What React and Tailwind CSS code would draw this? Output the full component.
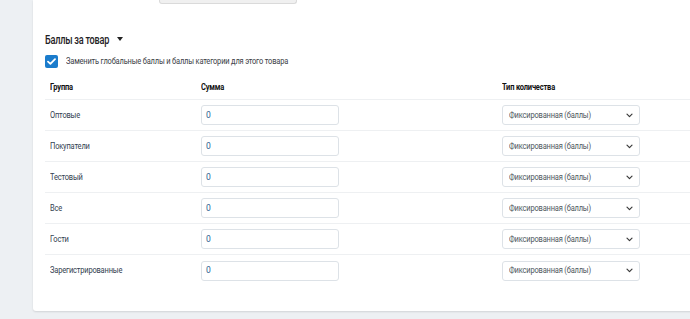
import React from "react";

const rows = ["Оптовые", "Покупатели", "Тестовый", "Все", "Гости", "Зарегистрированные"];

function Chevron() {
  return (
    <svg width="7" height="5" viewBox="0 0 7 5" className="shrink-0">
      <path d="M1 1.2 L3.5 3.7 L6 1.2" fill="none" stroke="#3a3a3a" strokeWidth="1.2" strokeLinecap="round" strokeLinejoin="round" />
    </svg>
  );
}

function T({ children, className = "" }) {
  return <span className={`inline-block whitespace-nowrap origin-left scale-x-[0.88] ${className}`}>{children}</span>;
}

export default function App() {
  return (
    <div className="w-[690px] h-[319px] overflow-hidden bg-[#edf0f3]" style={{ fontFamily: "Roboto, 'Liberation Sans', sans-serif" }}>
      <div className="ml-[33px] w-[680px] h-[311px] bg-white rounded-bl-[3px] shadow-[0_1px_2px_rgba(0,0,0,0.12)]">
        <div className="ml-[126px] w-[138px] h-[4px] bg-[#f0f0f0] border border-t-0 border-[#dadada] rounded-b-[3px]" />
        <div className="pl-[12px]">
          <div className="mt-[28px] flex items-center h-[14px]">
            <div className="w-[72px]">
              <span className="inline-block whitespace-nowrap origin-left scale-x-[0.76] text-[12px] font-medium text-[#1f2225] tracking-[-0.3px]">Баллы за товар</span>
            </div>
            <span className="w-0 h-0 border-l-[3.5px] border-r-[3.5px] border-t-[4px] border-l-transparent border-r-transparent border-t-[#222]" />
          </div>
          <div className="mt-[9px] flex items-center h-[13px]">
            <div className="w-[13px] h-[13px] rounded-[2px] bg-[#1b7ccc] flex items-center justify-center">
              <svg width="9" height="7" viewBox="0 0 9 7">
                <path d="M1 3.6 L3.4 5.8 L8 1.2" fill="none" stroke="white" strokeWidth="1.8" strokeLinecap="round" strokeLinejoin="round" />
              </svg>
            </div>
            <T className="ml-[8px] text-[8.5px] text-[#3b4046] tracking-[-0.2px]">Заменить глобальные баллы и баллы категории для этого товара</T>
          </div>
          <div className="mt-[8px] grid grid-cols-[156px_301px_1fr] h-[24px] items-center border-b border-[#eef0f2] text-[8.5px] font-bold text-[#111] tracking-[-0.2px]">
            <div className="pl-[5px]"><T>Группа</T></div>
            <div><T>Сумма</T></div>
            <div><T>Тип количества</T></div>
          </div>
          {rows.map((r, i) => (
            <div key={r} className={`grid grid-cols-[156px_301px_1fr] h-[31px] items-center ${i < rows.length - 1 ? "border-b border-[#eef0f2]" : ""}`}>
              <div className="pl-[5px] text-[8.5px] text-[#33414f] tracking-[-0.2px]"><T>{r}</T></div>
              <div>
                <div className="w-[138px] h-[20px] border border-[#dde2e7] rounded-[3px] flex items-center pl-[4px] text-[8.5px] text-[#2a5d8f]">0</div>
              </div>
              <div>
                <div className="w-[138px] h-[20px] border border-[#dde2e7] rounded-[3px] flex items-center justify-between pl-[6px] pr-[6px] text-[8.5px] text-[#50575e] tracking-[-0.2px]">
                  <T>Фиксированная (баллы)</T>
                  <Chevron />
                </div>
              </div>
            </div>
          ))}
        </div>
      </div>
    </div>
  );
}
